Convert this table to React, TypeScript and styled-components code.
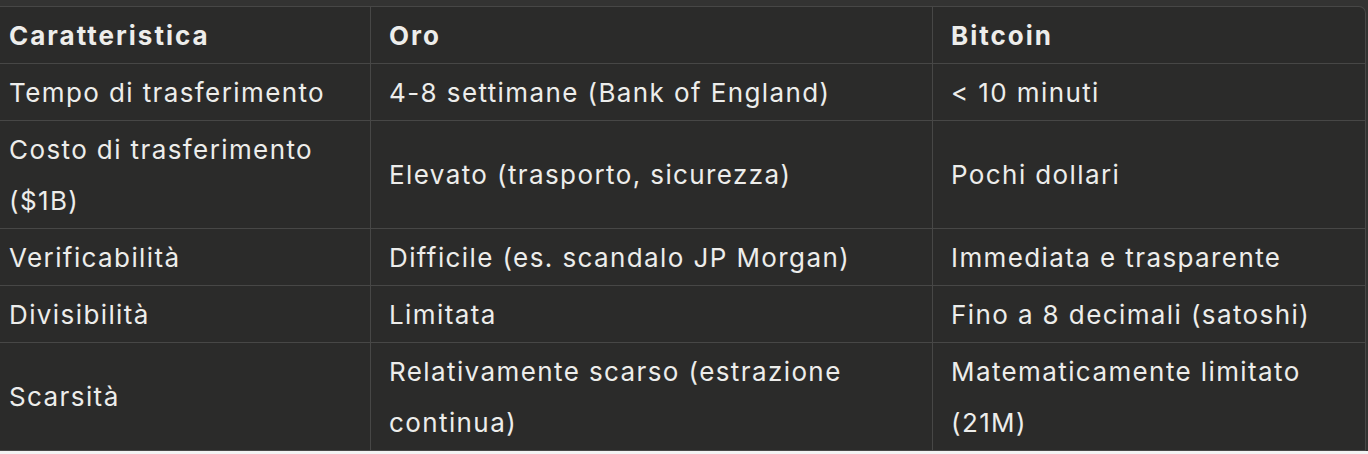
import React from 'react';
import styled, { createGlobalStyle } from 'styled-components';

const GlobalStyle = createGlobalStyle`
  html, body {
    margin: 0;
    padding: 0;
    background: #f3f3f3;
  }
`;

const Page = styled.div`
  background: #333332;
  padding: 6px 2px 0 0;
  font-family: Inter, "Noto Sans", sans-serif;
`;

const Table = styled.table`
  width: 100%;
  table-layout: fixed;
  border-collapse: separate;
  border-spacing: 0;
  background: #2b2b2a;
  color: #ededeb;
  border-top: 1px solid #474746;
  border-right: 1px solid #474746;
  border-bottom: 1px solid #474746;
  border-top-right-radius: 7px;
  font-size: 26px;
  line-height: 51px;
  letter-spacing: 1.4px;
`;

const HeadCell = styled.th<{ $first?: boolean }>`
  text-align: left;
  font-weight: 700;
  letter-spacing: 2px;
  padding: 2.5px 12px 2.5px ${({ $first }) => ($first ? '9px' : '18px')};
  border-bottom: 1px solid #474746;
  border-left: ${({ $first }) => ($first ? 'none' : '1px solid #474746')};
  vertical-align: middle;
`;

const Cell = styled.td<{ $first?: boolean; $last?: boolean }>`
  font-weight: 400;
  padding: 2.5px 12px 2.5px ${({ $first }) => ($first ? '9px' : '18px')};
  border-bottom: ${({ $last }) => ($last ? 'none' : '1px solid #474746')};
  border-left: ${({ $first }) => ($first ? 'none' : '1px solid #474746')};
  vertical-align: middle;
`;

const rows = [
  ['Tempo di trasferimento', '4-8 settimane (Bank of England)', '< 10 minuti'],
  ['Costo di trasferimento ($1B)', 'Elevato (trasporto, sicurezza)', 'Pochi dollari'],
  ['Verificabilità', 'Difficile (es. scandalo JP Morgan)', 'Immediata e trasparente'],
  ['Divisibilità', 'Limitata', 'Fino a 8 decimali (satoshi)'],
  ['Scarsità', 'Relativamente scarso (estrazione continua)', 'Matematicamente limitato (21M)'],
];

const App: React.FC = () => {
  return (
    <>
      <GlobalStyle />
      <Page>
        <Table>
          <colgroup>
            <col style={{ width: 370 }} />
            <col style={{ width: 562 }} />
            <col />
          </colgroup>
          <thead>
            <tr>
              <HeadCell $first>Caratteristica</HeadCell>
              <HeadCell>Oro</HeadCell>
              <HeadCell>Bitcoin</HeadCell>
            </tr>
          </thead>
          <tbody>
            {rows.map((row, i) => (
              <tr key={i}>
                {row.map((text, j) => (
                  <Cell key={j} $first={j === 0} $last={i === rows.length - 1}>
                    {text}
                  </Cell>
                ))}
              </tr>
            ))}
          </tbody>
        </Table>
      </Page>
    </>
  );
};

export default App;
